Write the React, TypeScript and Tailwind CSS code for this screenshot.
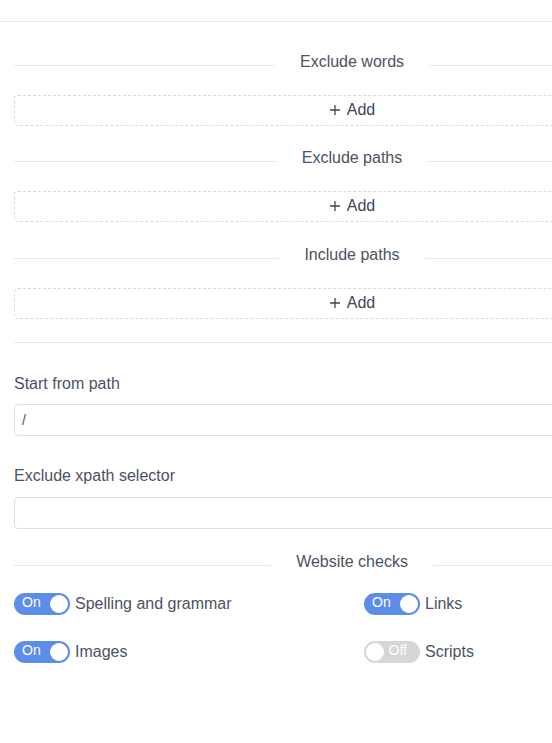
const sans = { fontFamily: '"Liberation Sans", Arial, sans-serif' };

function Divider({ label }: { label: string }) {
  return (
    <div className="flex h-6 items-center">
      <div className="mt-[6px] h-px flex-1 bg-[#e8e8ec]" />
      <span className="px-[25px] text-base leading-6 text-[#4b5263]">{label}</span>
      <div className="mt-[6px] h-px flex-1 bg-[#e8e8ec]" />
    </div>
  );
}

function AddBox() {
  return (
    <div className="mt-[21px] flex h-[31px] items-center justify-center gap-[6px] rounded border border-dashed border-[#d9dbe0] pb-[2px] text-base text-[#3c4759]">
      <svg width="12" height="12" viewBox="0 0 12 12">
        <path d="M6 1v10M1 6h10" stroke="#3c4759" strokeWidth="1.3" />
      </svg>
      <span>Add</span>
    </div>
  );
}

function Toggle({ on, label }: { on: boolean; label: string }) {
  return (
    <div className="flex h-6 items-center gap-[5px]">
      {on ? (
        <div className="flex h-[22px] w-14 items-center justify-between rounded-full bg-[#5b8de9] pl-[8px] pr-[2px]">
          <span className="mt-[-4px] text-[14px] leading-4 text-white">On</span>
          <span className="h-[18px] w-[18px] rounded-full bg-white" />
        </div>
      ) : (
        <div className="flex h-[22px] w-14 items-center justify-between rounded-full bg-[#d6d6d6] pl-[2px] pr-[13px]">
          <span className="h-[18px] w-[18px] rounded-full bg-white" />
          <span className="mt-[-4px] text-[14px] leading-4 text-white">Off</span>
        </div>
      )}
      <span className="text-base leading-6 text-[#4b5263]">{label}</span>
    </div>
  );
}

export default function App() {
  return (
    <div className="w-full overflow-hidden bg-white" style={sans}>
      <div className="w-[704px]">
        <div className="h-[22px] border-b border-[#e8e8ec]" />
        <div className="px-[14px] pb-20">
          <div className="mt-[28px]">
            <Divider label="Exclude words" />
            <AddBox />
          </div>
          <div className="mt-[20px]">
            <Divider label="Exclude paths" />
            <AddBox />
          </div>
          <div className="mt-[21px]">
            <Divider label="Include paths" />
            <AddBox />
          </div>
          <div className="mt-[23px] h-px bg-[#e8e8ec]" />

          <div className="mt-[29px] text-base leading-6 text-[#4b5263]">Start from path</div>
          <input
            className="mt-2 h-8 w-full rounded border border-[#dcdee3] px-[7px] text-[14px] text-[#4b5263] outline-none"
            defaultValue="/"
          />

          <div className="mt-[28px] text-base leading-6 text-[#4b5263]">Exclude xpath selector</div>
          <input className="mt-[9px] h-8 w-full rounded border border-[#dcdee3] px-[7px] text-[14px] outline-none" />

          <div className="mt-[21px]">
            <Divider label="Website checks" />
          </div>
          <div className="mt-[18px] grid grid-cols-2 gap-x-6 gap-y-6">
            <Toggle on label="Spelling and grammar" />
            <Toggle on label="Links" />
            <Toggle on label="Images" />
            <Toggle on={false} label="Scripts" />
          </div>
        </div>
      </div>
    </div>
  );
}
